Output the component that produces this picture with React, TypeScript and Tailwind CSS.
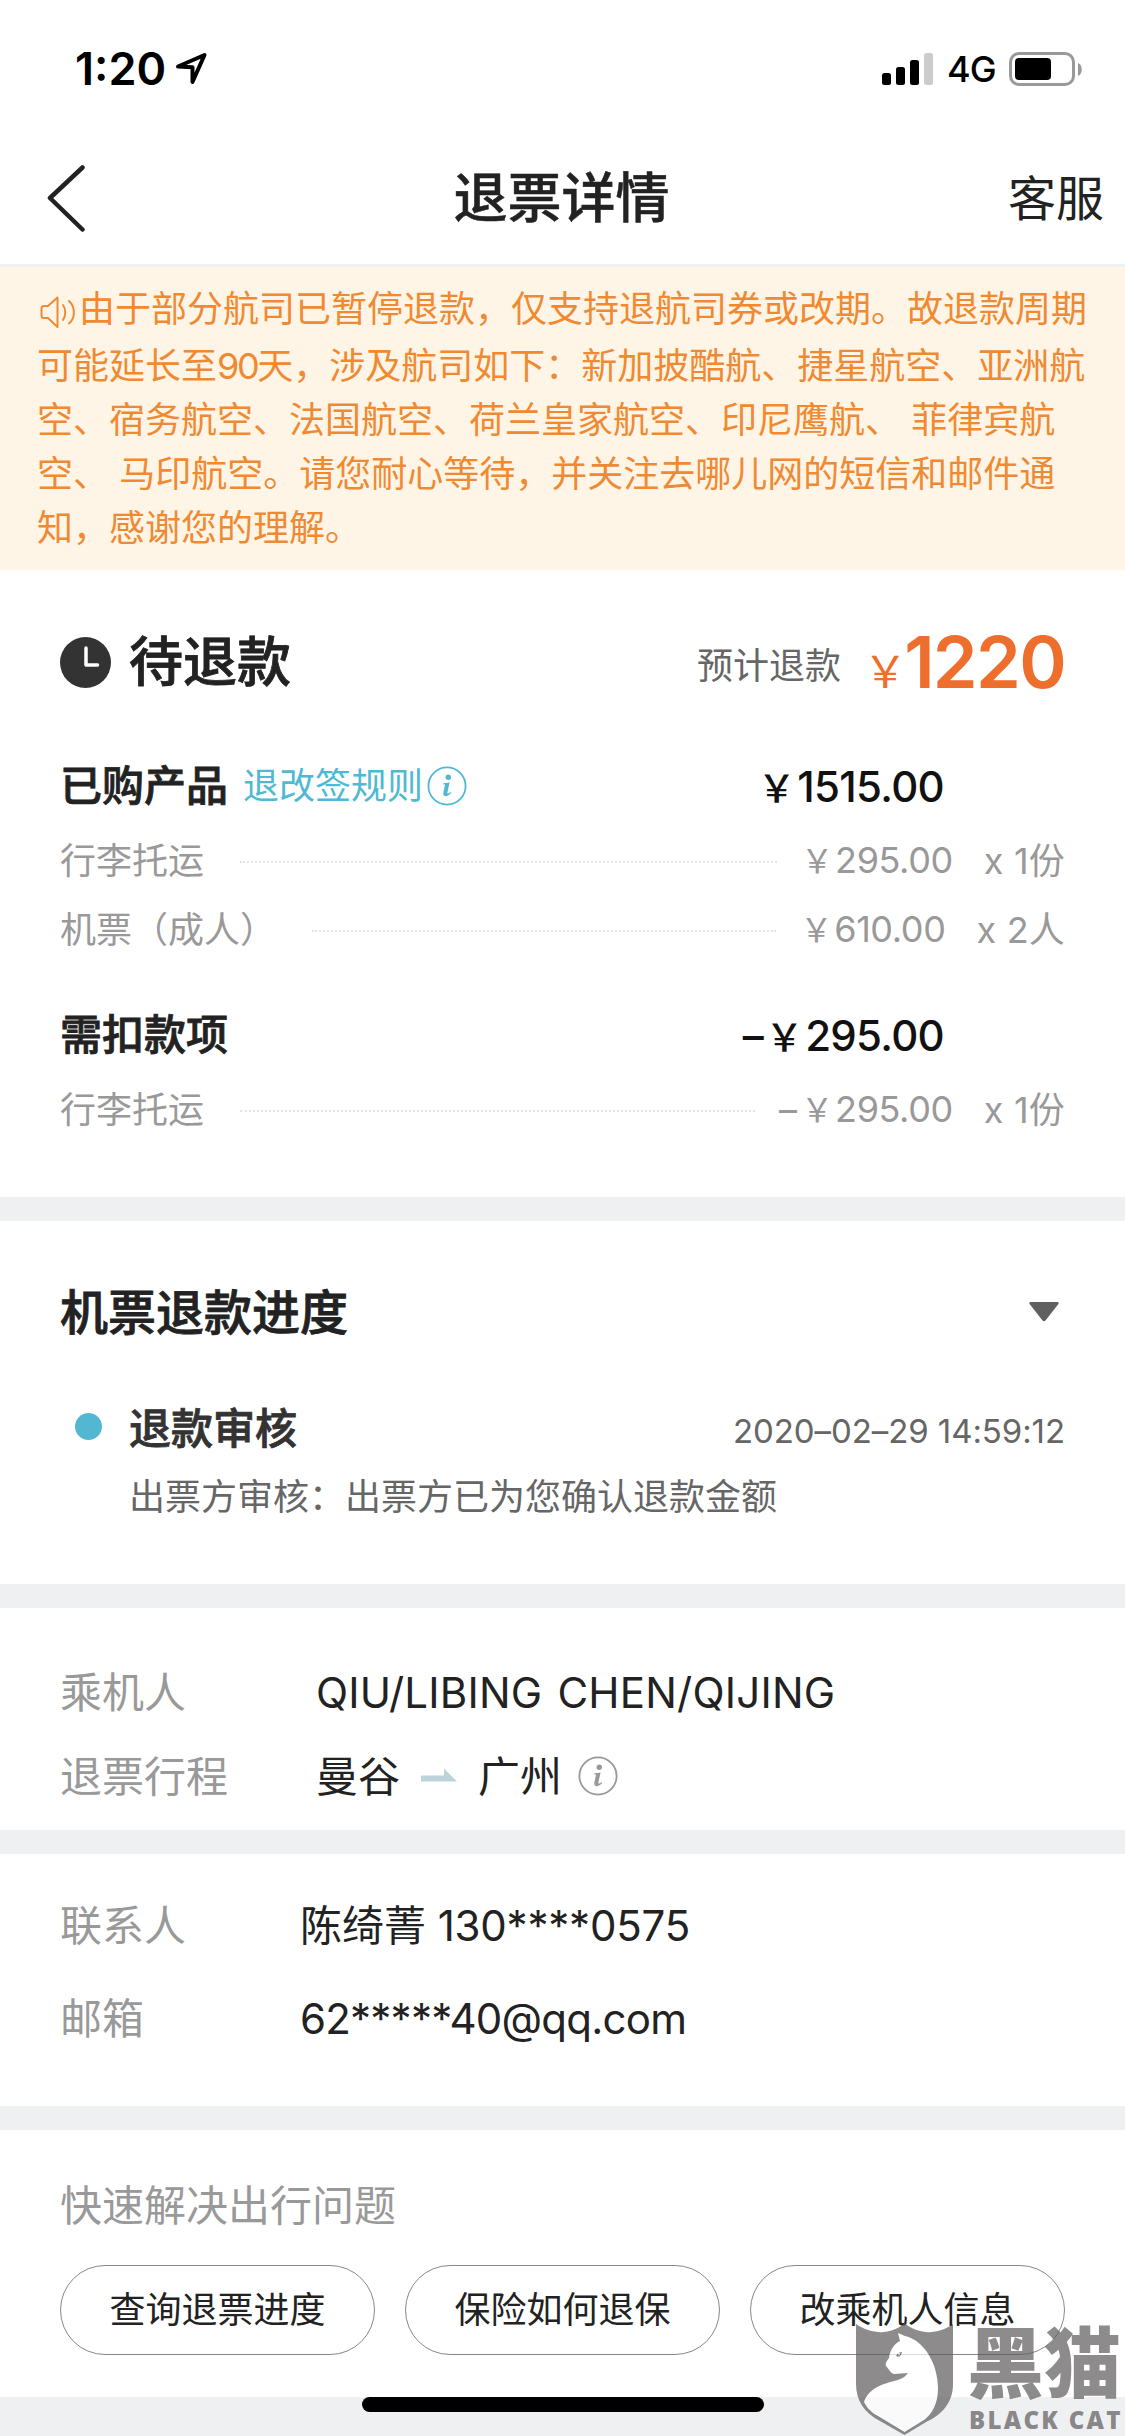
const noticeLines = [
  "空、宿务航空、法国航空、荷兰皇家航空、印尼鹰航、 菲律宾航",
  "空、 马印航空。请您耐心等待，并关注去哪儿网的短信和邮件通",
  "知，感谢您的理解。",
];

const purchased = [
  { name: "行李托运", price: "295.00", count: "x 1份" },
  { name: "机票（成人）", price: "610.00", count: "x 2人" },
];

const questions = ["查询退票进度", "保险如何退保", "改乘机人信息"];

const StatusBar = () => (
  <div className="h-[132px] flex items-start justify-between pl-[75px] pr-[40px] pt-[42px] text-black">
    <div className="flex items-center h-[54px]">
      <span className="text-[45px] leading-[54px] font-semibold">1:20</span>
      <svg className="ml-[7px]" width="36" height="36" viewBox="0 0 36 36" fill="none">
        <path
          d="M5 15.5 31.5 4 19.5 31V16.3Z"
          stroke="#000"
          strokeWidth="4"
          strokeLinejoin="round"
        />
      </svg>
    </div>
    <div className="flex items-center h-[54px]">
      <svg width="52" height="34" viewBox="0 0 52 34">
        <rect x="0" y="21" width="9" height="12" rx="2.5" />
        <rect x="14" y="15" width="9" height="18" rx="2.5" />
        <rect x="28" y="8" width="9" height="25" rx="2.5" />
        <rect x="42" y="1" width="9" height="32" rx="2.5" fill="#ccc" />
      </svg>
      <span className="ml-[13px] w-[62px] text-[36px] leading-[54px] font-medium tracking-[-1px]">
        4G
      </span>
      <svg width="76" height="36" viewBox="0 0 76 36">
        <rect
          x="1.5"
          y="2.5"
          width="63"
          height="31"
          rx="8.5"
          fill="none"
          stroke="#999"
          strokeWidth="3"
        />
        <rect x="6" y="7" width="36" height="22" rx="4" />
        <path d="M69 12c5 2 5 11 0 13Z" fill="#999" />
      </svg>
    </div>
  </div>
);

const InfoIcon = ({ color }: { color: string }) => (
  <svg width="40" height="40" viewBox="0 0 40 40" fill="none">
    <circle cx="20" cy="20" r="18.6" stroke={color} strokeWidth="1.8" />
    <circle cx="21.3" cy="11.3" r="2.7" fill={color} />
    <path
      d="M16.4 17.2c2-.2 4-.5 6.200-.8l-2.200 10c-.3 1.500.6 1.800 3.200-.3l.6.8c-4.600 4.600-8.800 4.200-7.800-.6l1.500-7c.2-.8-.2-1.100-1.700-1.100Z"
      fill={color}
    />
  </svg>
);

const Yen = () => (
  <span className="inline-block w-[1em] text-center">
    <span className="text-[0.9em]">￥</span>
  </span>
);

const PriceRow = ({
  name,
  price,
  count,
  minus,
}: {
  name: string;
  price: string;
  count: string;
  minus?: boolean;
}) => (
  <div className="h-[54px] flex items-center text-[36px] leading-[54px] text-[#999]">
    <span>{name}</span>
    <span className="flex-1 ml-9 mr-[22px] mt-[1px] border-t-2 border-dotted border-[#e4e4e4]" />
    {minus && <span className="ml-[2px] mr-[2px]">–</span>}
    <span className="tracking-[-0.4px]">
      <Yen />
      {price}
    </span>
    <span className="ml-[31px] tracking-[0.2px]">{count}</span>
  </div>
);

const Divider = () => <div className="h-6 bg-[#eff0f2]" />;

const Watermark = () => (
  <div className="absolute left-[856px] top-[2322px] w-[269px] h-[114px] opacity-70 flex">
    <svg className="shrink-0" width="98" height="114" viewBox="0 0 98 114">
      <path
        d="M0 2C16 13 36 13 48.500 1C62 13 82 13 97 2V62C97 82 84 94 70 100L48.500 113L24 99C8 91 0 78 0 62Z"
        fill="#5f5b5d"
      />
      <path
        d="M42 11 49 14C68 18 82 42 82 66C82 82 76 92 68 98L48.500 110L22 94C14 90 10 84 8 80C13 66 26 62 42 58C47 56 50 54 52 51L38 52C34 51 33 47 30 44C29 41 31 39 33 36C34 28 38 22 44 19Z"
        fill="#fff"
      />
      <path d="M40 34c2-3 3-4 6-4-1 4-3 6-6 4Z" fill="#5f5b5d" />
      <circle cx="43" cy="32" r="1" fill="#fff" />
    </svg>
    <div className="ml-[15px] text-[#5f5b5d] whitespace-nowrap">
      <div className="-ml-[2px] text-[77px] leading-[84px] font-black">黑猫</div>
      <div className="mt-[2px] font-['Open_Sans'] text-[24px] leading-[24px] font-extrabold tracking-[2.300px]">
        BLACK CAT
      </div>
    </div>
  </div>
);

export default function App() {
  return (
    <div className="relative w-[1125px] h-[2436px] overflow-hidden bg-white text-[#222] whitespace-nowrap font-['Inter','Noto_Sans_CJK_SC',sans-serif]">
      <StatusBar />

      <header className="h-[135px] pl-[47px] pr-[21px] grid grid-cols-3 items-center border-b-[3px] border-[#f0f1f3]">
        <svg width="40" height="68" viewBox="0 0 40 68" fill="none">
          <path
            d="M35.500 3.500 3 34 35.500 65.500"
            stroke="#222"
            strokeWidth="4.500"
            strokeLinecap="round"
            strokeLinejoin="round"
          />
        </svg>
        <h1 className="mt-[2px] -ml-[28px] text-[54px] leading-[60px] font-medium [-webkit-text-stroke:0.5px] text-center">
          退票详情
        </h1>
        <span className="mt-[2px] text-[48px] leading-[60px] text-right">客服</span>
      </header>

      <div className="h-[303px] pl-[37px] pt-[15px] bg-[#fff5e7] text-[36px] leading-[54px] text-[#ef8a33]">
        <div className="flex items-center mb-[3px]">
          <svg className="mr-[2px] mt-[5px]" width="40" height="36" viewBox="0 0 40 36" fill="none">
            <path
              d="M20.500 3.500 11 12H7a2.500 2.500 0 0 0-2.500 2.500v7A2.500 2.500 0 0 0 7 24h4l9.500 9Z"
              stroke="currentColor"
              strokeWidth="2"
              strokeLinejoin="round"
            />
            <path
              d="M26 11c3 4 3 11 0 15M32 7c6.500 6 6.500 17 0 22.500"
              stroke="currentColor"
              strokeWidth="2"
              strokeLinecap="round"
            />
          </svg>
          <span>由于部分航司已暂停退款，仅支持退航司券或改期。故退款周期</span>
        </div>
        <div>
          可能延长至<span className="tracking-[-2.400px]">90</span>
          天，涉及航司如下：新加披酷航、捷星航空、亚洲航
        </div>
        {noticeLines.map((line) => (
          <div key={line}>{line}</div>
        ))}
      </div>

      <section className="h-[627px] px-[60px] pt-[47px]">
        <div className="h-[90px] flex items-center">
          <svg width="51" height="51" viewBox="0 0 51 51">
            <circle cx="25.500" cy="25.500" r="25.500" fill="#333" />
            <path
              d="M26 11v17h11.500"
              fill="none"
              stroke="#fff"
              strokeWidth="3.500"
              strokeLinecap="round"
              strokeLinejoin="round"
            />
          </svg>
          <h2 className="ml-[18px] mt-[2px] text-[54px] leading-[60px] font-medium [-webkit-text-stroke:0.8px]">
            待退款
          </h2>
          <span className="ml-auto mt-[7px] text-[36px] text-[#666]">预计退款</span>
          <div className="ml-[22px] -mt-[1px] flex items-baseline text-[#ee6f2d]">
            <span className="-mr-[3px] text-[44px]">￥</span>
            <span className="text-[72px] leading-[90px] font-semibold tracking-[-1.700px]">
              1220
            </span>
          </div>
        </div>

        <div className="mt-[52px] h-[54px] flex items-center text-[42px] leading-[54px]">
          <h3 className="font-medium [-webkit-text-stroke:0.8px]">已购产品</h3>
          <span className="ml-[15px] text-[36px] text-[#4fb9d3]">退改签规则</span>
          <span className="ml-[4px]">
            <InfoIcon color="#4fb9d3" />
          </span>
          <span className="ml-auto mr-[121px] mt-[2px] font-medium text-[#111] tracking-[-0.700px]">
            <Yen />
            1515.00
          </span>
        </div>
        <div className="mt-[21px] flex flex-col gap-[15px]">
          {purchased.map((item) => (
            <PriceRow key={item.name} {...item} />
          ))}
        </div>

        <div className="mt-[51px] h-[54px] flex items-center justify-between text-[42px] leading-[54px]">
          <h3 className="font-medium [-webkit-text-stroke:0.8px]">需扣款项</h3>
          <span className="mr-[121px] mt-[2px] font-medium text-[#111] tracking-[-0.700px]">
            –<Yen />
            295.00
          </span>
        </div>
        <div className="mt-[21px]">
          <PriceRow name="行李托运" price="295.00" count="x 1份" minus />
        </div>
      </section>

      <Divider />

      <section className="h-[363px] px-[60px] pt-[62px]">
        <div className="h-[60px] flex items-center justify-between">
          <h2 className="text-[48px] font-medium [-webkit-text-stroke:0.8px]">机票退款进度</h2>
          <svg className="mr-[6px] -mt-[4px]" width="30" height="21" viewBox="0 0 30 21">
            <path
              d="M1.500 1h27c1.500 0 1.500 1.500.5 2.500L16.500 19.500c-1 1-2 1-3 0L1 3.500C0 2.500 0 1 1.500 1Z"
              fill="#606060"
            />
          </svg>
        </div>
        <div className="mt-[58px] h-[54px] flex items-center">
          <span className="ml-[15px] -mt-[3px] size-[27px] rounded-full bg-[#54b7d2]" />
          <h3 className="ml-[27px] text-[42px] font-medium text-[#333] [-webkit-text-stroke:0.8px]">
            退款审核
          </h3>
          <span className="ml-auto mt-[8px] text-[33px] text-[#666] tracking-[-0.08px]">
            2020–02–29 14:59:12
          </span>
        </div>
        <p className="mt-[15px] ml-[69px] text-[36px] leading-[54px] text-[#666]">
          出票方审核：出票方已为您确认退款金额
        </p>
      </section>

      <Divider />

      <section className="h-[222px] px-[60px] pt-[58px] text-[42px] leading-[54px]">
        <div className="flex">
          <span className="w-[256px] text-[#999]">乘机人</span>
          <span className="tracking-[0.220px] [word-spacing:3px]">QIU/LIBING CHEN/QIJING</span>
        </div>
        <div className="mt-[30px] flex items-center">
          <span className="w-[256px] text-[#999]">退票行程</span>
          <span>曼谷</span>
          <svg className="ml-[21px] -mt-[4px]" width="36" height="14" viewBox="0 0 36 14">
            <path d="M0 7.500H23V0.500L36 13.500H0Z" fill="#bdd3da" />
          </svg>
          <span className="ml-[21px]">广州</span>
          <span className="ml-[16px] -mt-[2px]">
            <InfoIcon color="#999" />
          </span>
        </div>
      </section>

      <Divider />

      <section className="h-[252px] px-[60px] pt-[45px] text-[42px] leading-[54px]">
        <div className="flex">
          <span className="w-[240px] text-[#999]">联系人</span>
          <span>
            陈绮菁<span className="tracking-[-0.200px]"> 130****0575</span>
          </span>
        </div>
        <div className="mt-[39px] flex">
          <span className="w-[240px] text-[#999]">邮箱</span>
          <span className="tracking-[-0.780px]">62*****40@qq.com</span>
        </div>
      </section>

      <Divider />

      <section className="h-[267px] px-[60px] pt-[49px]">
        <p className="text-[42px] leading-[54px] text-[#999]">快速解决出行问题</p>
        <div className="mt-[32px] grid grid-cols-3 gap-[30px]">
          {questions.map((question) => (
            <button
              key={question}
              className="h-[90px] rounded-full border border-[#888] text-[36px] leading-[54px]"
            >
              {question}
            </button>
          ))}
        </div>
      </section>

      <div className="h-[39px] bg-[#eff0f2]">
        <div className="mx-auto w-[402px] h-[15px] rounded-full bg-black" />
      </div>

      <Watermark />
    </div>
  );
}
